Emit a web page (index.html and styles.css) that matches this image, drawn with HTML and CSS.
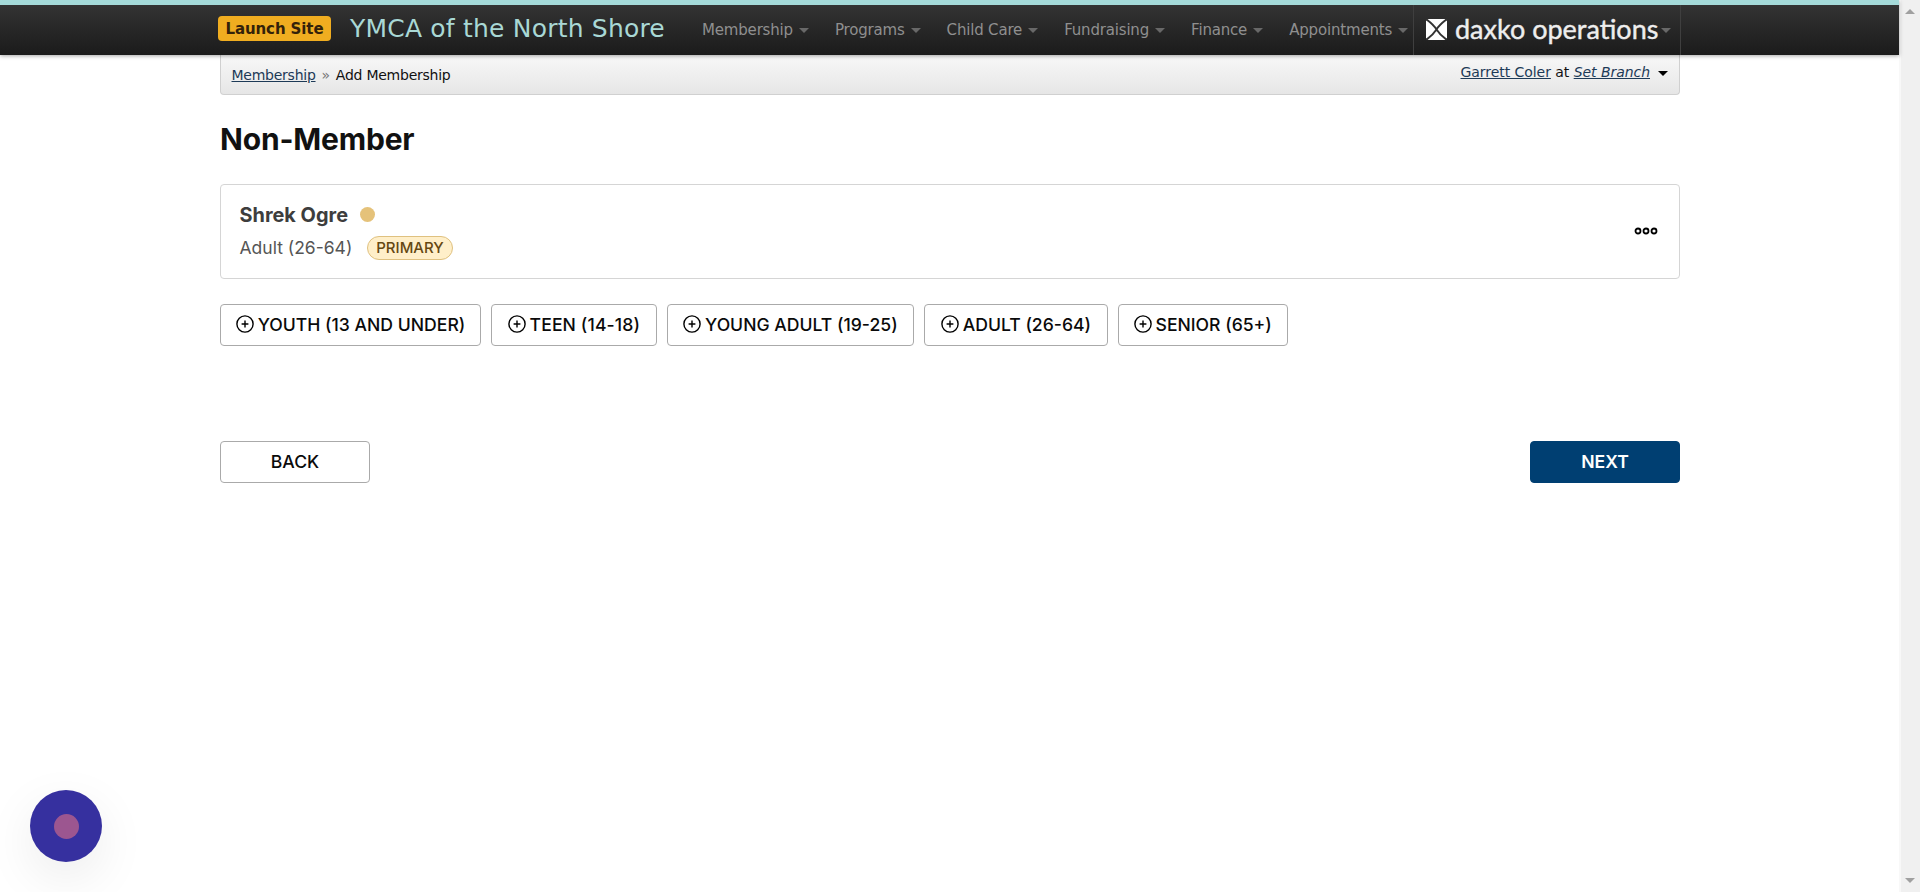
FILE: index.html
```html
<!DOCTYPE html>
<html lang="en">
<head>
<meta charset="utf-8">
<title>Add Membership</title>
<link rel="stylesheet" href="styles.css">
</head>
<body>
<svg class="defs" aria-hidden="true">
  <symbol id="plus" viewBox="0 0 18 18"><circle cx="9" cy="9" r="8.1"/><path d="M9 5.600v6.800M5.600 9h6.800"/></symbol>
</svg>
<div class="page">
  <header class="topbar">
    <div class="topbar-inner">
      <a class="launch">Launch Site</a>
      <div class="org">YMCA of the North Shore</div>
      <nav class="nav">
        <a class="nav-item">Membership<i class="caret"></i></a>
        <a class="nav-item">Programs<i class="caret"></i></a>
        <a class="nav-item">Child Care<i class="caret"></i></a>
        <a class="nav-item">Fundraising<i class="caret"></i></a>
        <a class="nav-item">Finance<i class="caret"></i></a>
        <a class="nav-item">Appointments<i class="caret"></i></a>
      </nav>
      <a class="brand">
        <svg class="brand-mark" viewBox="0 0 21 21"><path class="tile" d="M2 0h17l2 2v17l-2 2H2l-2-2V2z"/><path class="cross" d="M0 0Q8 6 10.500 10.500Q13 6 21 0M0 21Q7 16 10.500 10.500Q14 16 21 21"/></svg>
        <span class="brand-name">daxko operations</span><i class="caret"></i>
      </a>
    </div>
  </header>
  <main class="content">
    <div class="crumbs">
      <div class="trail"><a class="link">Membership</a><span class="sep">»</span>Add Membership</div>
      <div class="user"><a class="link">Garrett Coler</a> at <a class="link branch">Set Branch</a><i class="caret caret-dark"></i></div>
    </div>
    <h1 class="title">Non-Member</h1>
    <section class="card">
      <div class="person">
        <div class="name-row"><span class="name">Shrek Ogre</span><i class="dot"></i></div>
        <div class="type-row"><span class="type">Adult (26-64)</span><span class="badge">PRIMARY</span></div>
      </div>
      <svg class="more" viewBox="0 0 24 8"><circle cx="4" cy="4" r="2.500"/><circle cx="12" cy="4" r="2.500"/><circle cx="20" cy="4" r="2.500"/></svg>
    </section>
    <div class="adders">
      <button class="btn add"><svg class="plus"><use href="#plus"/></svg>YOUTH (13 AND UNDER)</button>
      <button class="btn add loose"><svg class="plus"><use href="#plus"/></svg>TEEN (14-18)</button>
      <button class="btn add"><svg class="plus"><use href="#plus"/></svg>YOUNG ADULT (19-25)</button>
      <button class="btn add"><svg class="plus"><use href="#plus"/></svg>ADULT (26-64)</button>
      <button class="btn add"><svg class="plus"><use href="#plus"/></svg>SENIOR (65+)</button>
    </div>
    <div class="actions">
      <button class="btn wide">BACK</button>
      <button class="btn wide primary">NEXT</button>
    </div>
  </main>
</div>
<aside class="scrollbar"><i class="up"></i><i class="down"></i></aside>
<div class="bubble"><i class="bubble-core"></i></div>
</body>
</html>
```
FILE: styles.css
```css
* { box-sizing: border-box; }
body { margin: 0; display: flex; height: 892px; overflow: hidden; background: #fff; font-family: "DejaVu Sans", Verdana, sans-serif; color: #111; }
.defs { position: absolute; width: 0; height: 0; }
.page { flex: 1; }
.topbar { height: 55px; border-top: 5px solid #a5dad9; background: linear-gradient(#333, #1b1b1b); box-shadow: 0 1px 4px rgba(0,0,0,.35); position: relative; }
.topbar-inner { width: 1463px; margin-left: 218px; height: 50px; display: flex; align-items: center; }
.launch { width: 113px; height: 25px; line-height: 26px; margin-bottom: 3px; border-radius: 4px; background: #f0ad20; color: #33220a; font-weight: bold; font-size: 15px; letter-spacing: -.1px; text-align: center; white-space: nowrap; }
.org { width: 353px; padding-left: 19px; font-size: 25px; letter-spacing: .2px; color: #a9d8d5; white-space: nowrap; margin-bottom: 4px; }
.nav { display: flex; width: 729px; padding-left: 18px; gap: 26px; font-size: 15px; letter-spacing: -.18px; color: #8f8f8f; }
.nav-item { display: flex; align-items: center; gap: 6px; white-space: nowrap; }
.caret { border: 5px solid transparent; border-top-color: #686868; border-bottom: 0; }
.caret-dark { display: inline-block; border-top-color: #000; margin-left: 8px; vertical-align: 1px; }
.brand { height: 50px; width: 268px; border-left: 1px solid #3f3f3f; border-right: 1px solid #3f3f3f; padding-left: 12px; display: flex; align-items: center; }
.brand-mark { width: 21px; height: 21px; margin: 0 8px 2px 0; }
.tile { fill: #fff; }
.cross { fill: none; stroke: #333; stroke-width: 1.900; }
.brand-name { font: 27px "Lato", sans-serif; color: #eee; width: 206px; white-space: nowrap; margin-bottom: 4px; -webkit-text-stroke: .4px #eee; }
.content { width: 1460px; margin-left: 220px; }
.crumbs { height: 40px; border: 1px solid #d0d0d0; border-top: 0; border-radius: 0 0 4px 4px; background: linear-gradient(#f8f8f8, #e6e6e6); display: flex; justify-content: space-between; padding: 10px 11px 0 10.500px; font-size: 14px; line-height: 20px; }
.trail { letter-spacing: -.25px; }
.link { color: #1d3a57; text-decoration: underline; }
.branch { font-style: italic; }
.sep { color: #777; margin: 0 6px; }
.user { margin-top: -3px; letter-spacing: -.05px; }
.title { margin: 25px 0 0; height: 39px; font: bold 30px/39px Inter, sans-serif; letter-spacing: -.18px; }
.card { margin-top: 25px; height: 95px; border: 1px solid #d5d5d5; border-radius: 4px; padding: 16px 21px 0 18.500px; display: flex; justify-content: space-between; font-family: Inter, sans-serif; }
.name-row { display: flex; align-items: center; height: 27px; }
.name { font-size: 19.900px; font-weight: 650; color: #3d3d3d; width: 108.500px; white-space: nowrap; }
.dot { width: 15px; height: 15px; border-radius: 50%; background: #e5c27a; margin-left: 11.500px; }
.type-row { display: flex; align-items: center; height: 25px; margin-top: 7px; }
.type { font-size: 17.500px; color: #555; width: 112px; white-space: nowrap; }
.badge { height: 24px; width: 86px; margin-left: 15.500px; border: 1px solid #dfc180; border-radius: 12px; background: #ffefc9; color: #654812; font-size: 15px; line-height: 21.500px; text-align: center; font-weight: 450; }
.more { width: 24px; height: 8px; margin-top: 26px; fill: none; stroke: #000; stroke-width: 1.800; }
.adders { display: grid; grid-template-columns: 261px 166px 247.500px 184px 170px; column-gap: 9.800px; margin-top: 25px; }
.btn { height: 42px; border: 1px solid #aaa; border-radius: 4px; background: #fff; color: #0a0a0a; font: 500 17.600px Inter, sans-serif; padding: 0 0 2px; display: flex; align-items: center; justify-content: center; white-space: nowrap; }
.add { gap: 4px; }
.loose { letter-spacing: .12px; }
.plus { width: 18px; height: 18px; fill: none; stroke: #000; stroke-width: 1.400; }
.actions { display: flex; justify-content: space-between; margin-top: 95px; }
.wide { width: 150px; }
.primary { background: #003f72; border-color: #003f72; color: #fff; font-weight: 600; }
.scrollbar { width: 21px; background: #f0f0f0; border-left: 2px solid #f8f8f8; display: flex; flex-direction: column; justify-content: space-between; align-items: center; padding: 9px 2px 9px 0; }
.up, .down { border: 5px solid transparent; }
.up { border-top: 0; border-bottom-color: #a0a0a0; }
.down { border-bottom: 0; border-top-color: #a0a0a0; }
.bubble { position: absolute; left: 30px; top: 790px; width: 72px; height: 72px; border-radius: 50%; background: #36309f; box-shadow: 0 16px 50px rgba(0,0,0,.08); display: flex; align-items: center; justify-content: center; }
.bubble-core { width: 25px; height: 25px; border-radius: 50%; background: #9c5690; }
```
